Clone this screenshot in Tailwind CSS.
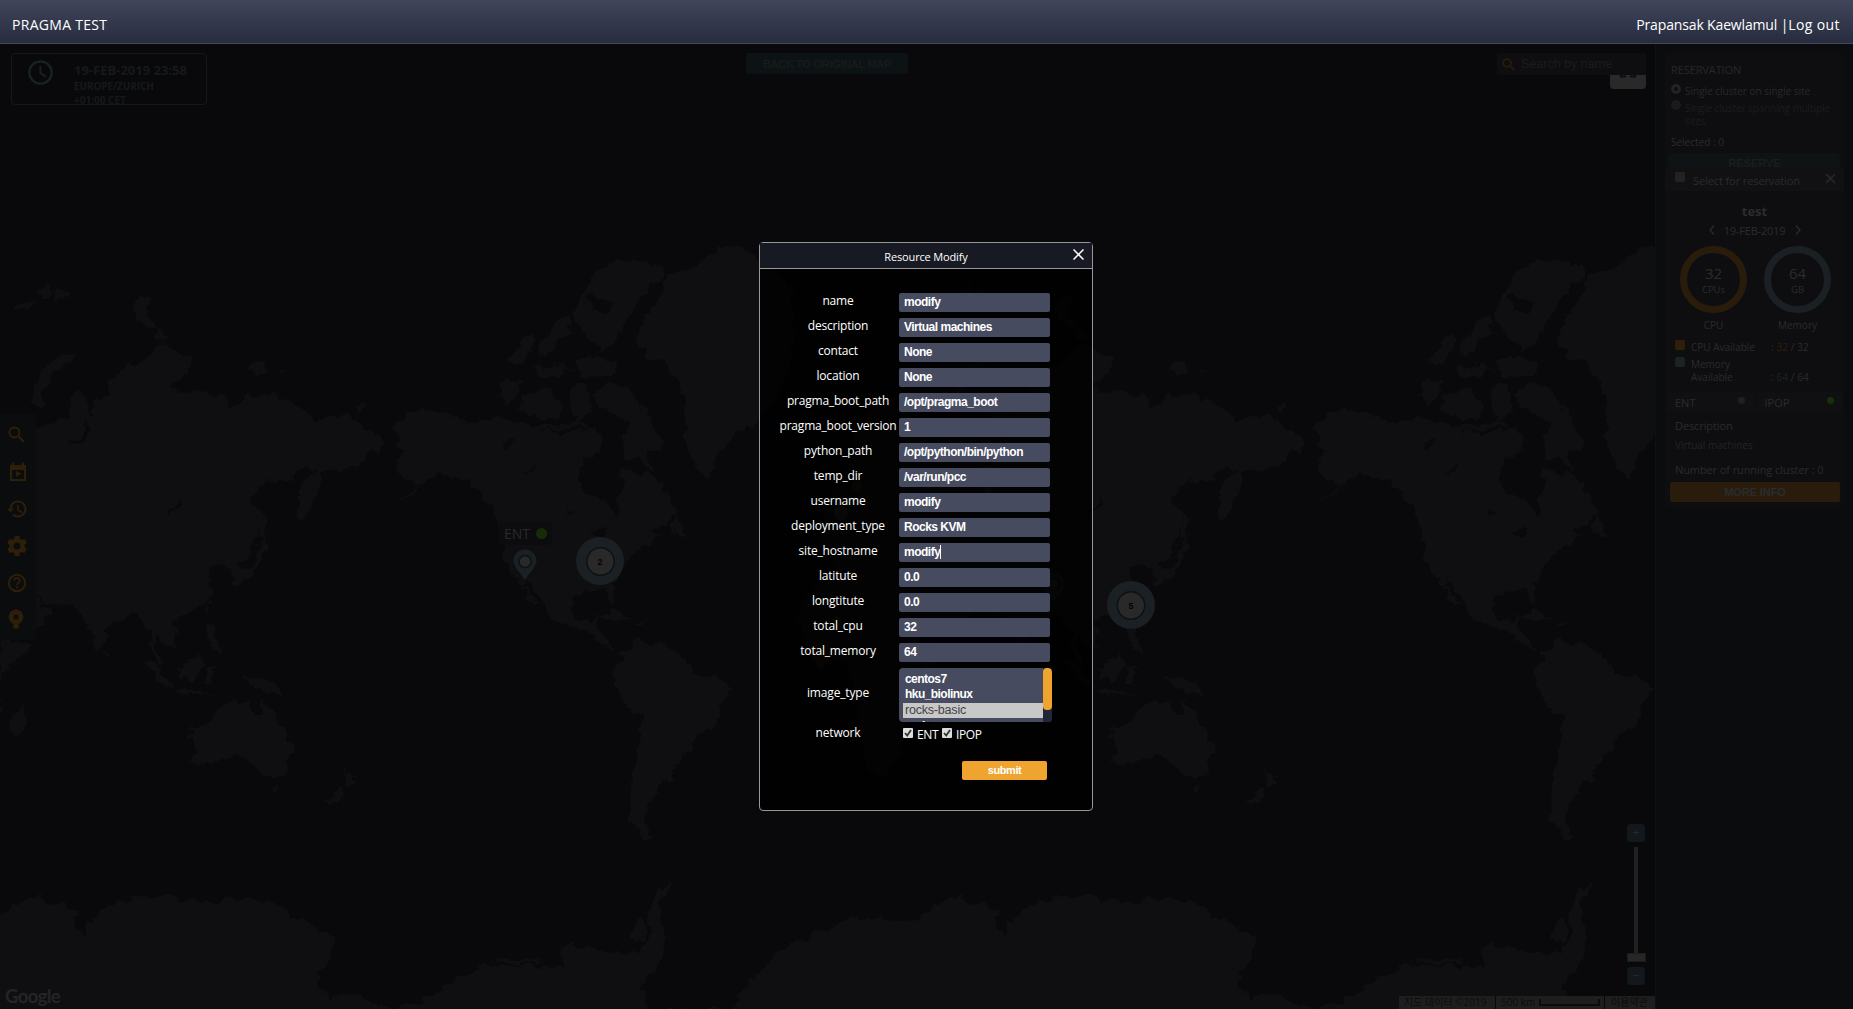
<!DOCTYPE html>
<html lang="en">
<head>
<meta charset="utf-8">
<title>PRAGMA TEST</title>
<script src="https://cdn.jsdelivr.net/npm/@tailwindcss/browser@4"></script>
</head>
<body class="bg-[#09090b]">
<div class="relative flex h-[1009px] w-[1853px] flex-col overflow-hidden bg-[#09090b] font-['Open_Sans','Noto_Sans_CJK_KR',sans-serif] text-[#2b2b2c]">

  <header class="z-10 flex h-11 shrink-0 items-center justify-between border-b border-[#41465c] bg-linear-to-b from-[#40455a] to-[#282c3f] pl-3 pr-[13px] pt-1.5 text-[14px] text-white">
    <span class="tracking-[0.3px]">PRAGMA TEST</span>
    <span class="tracking-[-0.15px]">Prapansak Kaewlamul |<span class="tracking-[0.4px]">Log out</span></span>
  </header>

  <main class="flex min-h-0 flex-1">
    <section class="relative flex-1 overflow-hidden">
      <!-- world map, repeated horizontally -->
      <svg class="absolute left-0 top-0" width="1655" height="965" viewBox="0 44 1655 965">
        <defs>
          <filter id="coast" color-interpolation-filters="sRGB" filterUnits="userSpaceOnUse" x="-100" y="220" width="1100" height="800">
            <feTurbulence type="fractalNoise" baseFrequency="0.09" numOctaves="3" seed="4" result="n"/>
            <feDisplacementMap in="SourceGraphic" in2="n" scale="13" xChannelSelector="R" yChannelSelector="G"/>
          </filter>
          <g id="world" filter="url(#coast)"><g transform="translate(0 220) scale(.4974 .5032)">
            <g fill="#0f0f11">
              <path d="M-130 450L-90 400L-60 385L-20 420L20 400L72 410L108 404L140 392L147 350L160 335L172 350L180 390L190 360L215 350L218 320L240 305L262 288L290 284L312 250L335 246L350 262L378 268L384 290L365 318L345 332L380 340L430 350L450 340L462 375L500 350L540 346L580 358L620 380L632 396L700 388L735 410L775 443L765 462L748 455L720 488L690 495L650 498L640 530L630 560L605 600L598 560L610 520L640 490L600 500L585 516L535 518L497 560L525 580L522 625L498 668L478 682L488 702L470 710L462 690L445 684L418 690L425 740L408 770L365 786L345 800L360 825L352 845L335 848L318 830L308 822L312 850L330 878L322 885L304 850L300 815L285 800L268 780L248 790L215 815L205 850L194 850L172 800L165 782L140 764L90 760L70 740L90 765L105 782L80 808L30 830L0 800L-30 750L-60 730L-130 700Z"/>
              <path d="M62 370L72 320L95 285L125 268L153 263L148 280L110 302L90 335L80 375Z"/>
              <path d="M270 185L282 150L296 152L298 185L312 210L295 220ZM312 212L338 238L330 245L314 232Z"/>
              <path d="M30 165L70 160L60 185L32 172ZM78 140L95 128L100 150L82 160ZM104 148L120 135L133 155L112 162ZM502 290L520 280L530 292L545 298L522 312L504 305ZM552 300L572 303L560 308ZM718 372L730 366L736 374L720 378Z"/>
              <path d="M524 575L538 600L530 640L545 645L528 662L522 690L505 705L475 722L465 720L480 702L512 688L518 650L526 630Z"/>
              <path d="M416 776L424 752L428 760L420 778ZM208 852L218 862L212 864ZM415 800L428 805L430 835L446 855L440 862L418 838ZM288 870L312 880L335 915L348 934L330 928L305 898ZM350 934L412 940L440 944L400 946L352 938ZM358 892L385 870L400 862L408 882L392 915L362 908ZM410 890L445 884L422 898L430 922L412 920ZM480 905L510 908L550 918L575 948L540 935L510 930Z"/>
              <path d="M380 1015L430 992L445 970L470 955L498 960L508 985L525 985L530 950L548 982L568 1010L588 1045L582 1070L570 1108L535 1106L512 1090L500 1068L465 1065L430 1075L398 1085L388 1078L390 1050ZM542 1124L562 1124L552 1140ZM690 1085L702 1100L716 1104L700 1128L690 1120L700 1110ZM655 1160L685 1130L692 1136L668 1164Z"/>
              <path d="M0 835L62 840L45 865L10 895L0 920ZM18 1000L48 958L54 975L40 1025L24 1028ZM0 945L6 960L2 980L0 980Z"/>
              <!-- north america -->
              <path d="M790 410L820 384L845 373L900 388L950 405L1000 388L1060 405L1110 410L1160 395L1200 420L1215 440L1200 465L1170 485L1163 512L1180 545L1225 560L1232 588L1244 585L1240 555L1255 535L1245 500L1255 488L1290 500L1315 510L1340 540L1363 580L1345 600L1310 618L1325 630L1290 650L1272 665L1245 700L1230 730L1238 762L1225 758L1215 735L1180 736L1152 745L1148 775L1165 798L1190 795L1200 780L1196 810L1215 820L1225 845L1250 858L1215 850L1190 822L1112 795L1085 755L1060 715L1050 725L1088 772L1070 760L1040 715L1012 675L1008 620L985 575L960 535L930 518L895 505L860 515L845 535L785 572L820 545L848 528L800 505L795 485L815 460L790 450L800 435Z"/>
              <path d="M1155 190L1170 150L1200 100L1245 80L1300 80L1335 100L1325 125L1290 150L1262 200L1240 240L1215 262L1180 230L1160 210Z"/>
              <path d="M1005 345L1012 315L1050 322L1045 345L1015 372ZM1050 350L1100 330L1130 370L1115 400L1070 392L1045 378ZM1020 280L1050 240L1070 225L1075 250L1045 285ZM1080 260L1110 205L1145 190L1150 230L1120 240L1100 275ZM1070 290L1110 295L1130 278L1145 300L1090 318ZM1155 280L1175 268L1240 285L1240 310L1170 312ZM1150 330L1180 330L1188 380L1160 400L1150 370ZM1190 345L1230 325L1260 335L1300 380L1332 440L1325 460L1300 450L1310 498L1285 480L1260 470L1250 430L1268 410L1245 390L1205 378Z"/>
              <path d="M1348 605L1362 588L1378 625L1350 620ZM1190 790L1230 775L1272 795L1240 792ZM1275 797L1310 802L1280 804Z"/>
              <path d="M1278 232L1300 190L1330 150L1340 110L1400 90L1440 60L1490 52L1526 75L1560 90L1590 140L1600 240L1575 330L1526 405L1480 425L1445 460L1425 516L1398 490L1375 430L1378 380L1362 320L1340 282L1300 275Z"/>
              <!-- south america -->
              <path d="M1250 860L1280 835L1325 842L1360 858L1385 875L1392 898L1440 908L1470 932L1450 965L1440 1005L1402 1025L1382 1065L1355 1085L1355 1105L1328 1115L1318 1145L1305 1155L1298 1195L1308 1230L1280 1220L1262 1180L1270 1110L1285 1040L1290 990L1262 970L1234 925L1240 890Z"/>
              <!-- europe and africa -->
              <path d="M1660 560L1700 500L1720 410L1770 360L1830 380L1850 700L1700 710L1650 660ZM1650 710L1760 700L1850 760L1840 960L1810 1060L1770 1110L1740 1080L1720 950L1700 880L1620 860L1600 790Z"/>
              <!-- antarctica -->
              <path d="M-20 1400L30 1360L75 1345L100 1358L158 1370L150 1400L165 1420L175 1395L215 1365L250 1352L310 1342L370 1350L415 1356L490 1345L550 1358L590 1380L640 1410L676 1428L665 1470L645 1495L638 1515L655 1550L700 1535L760 1560L810 1566L860 1545L900 1520L960 1482L1080 1480L1130 1488L1125 1440L1180 1448L1240 1455L1290 1455L1310 1415L1300 1375L1320 1335L1362 1314L1325 1360L1336 1420L1335 1470L1290 1520L1300 1568L1470 1568L1500 1525L1568 1450L1700 1390L1852 1390V1600H-20Z"/>
              <path d="M1262 1420L1290 1385L1302 1430L1280 1440ZM990 1470L1060 1465L1100 1474L1000 1478Z"/>
            </g>
            <g fill="#09090b">
              <path d="M330 588L350 570L362 552L360 570ZM130 440L165 430L172 395L178 420L168 440L140 450ZM1010 440L1040 432L1020 455ZM1052 498L1090 485L1065 500ZM1140 570L1152 590L1146 592ZM1185 622L1215 618L1210 630ZM1180 150L1240 165L1215 190L1195 180ZM1080 420L1200 410L1150 424Z"/>
            </g>
          </g></g>
        </defs>
        <use href="#world"/>
        <use href="#world" x="921"/>
      </svg>

      <!-- clock -->
      <div class="absolute left-[11px] top-[9px] flex h-[52px] w-[196px] overflow-hidden rounded border border-[#14181b] text-[#15191c]">
        <svg class="ml-4 mt-1.5 size-[25px] shrink-0" viewBox="0 0 25 25" fill="none" stroke="#1a2125" stroke-width="2.3"><circle cx="12.5" cy="12.5" r="11.2"/><path d="M12.3 6v7l5.8 3.8" stroke-width="1.8"/></svg>
        <div class="ml-[21px] mt-[7px] whitespace-nowrap text-[10px] font-bold leading-[14px]">
          <p class="text-[13px] leading-[18px]">19-FEB-2019 23:58</p>
          <p class="tracking-[-0.1px]">EUROPE/ZURICH</p>
          <p class="leading-[14px]">+01:00 CET</p>
        </div>
      </div>

      <button class="absolute left-[746px] top-[9px] h-[21px] w-[162px] rounded-xs bg-[#0d1214] pt-px font-['Liberation_Sans'] text-[11px] font-bold leading-[20px] tracking-[-0.3px] text-[#181a1b]">BACK TO ORIGINAL MAP</button>

      <div class="absolute left-[1610px] top-[30px] h-[15px] w-9 rounded-b-sm bg-[#29292a]">
        <svg class="absolute left-2.5 top-0" width="16" height="5" fill="none" stroke="#0c0c0d" stroke-width="2"><path d="M1 0v2.500h5M15 0v2.500h-5"/></svg>
      </div>
      <div class="absolute left-[1497px] top-[9px] flex h-[22px] w-[149px] items-center gap-1.5 bg-[#0e0e10] pl-[5px] pt-px font-['Liberation_Sans'] text-[12.500px] text-[#1b1b1d]">
        <svg class="size-[13px]" viewBox="0 0 13 13" fill="none" stroke="#2b1d08" stroke-width="1.7"><circle cx="5" cy="5" r="3.9"/><path d="M8 8l4.300 4.300"/></svg>
        <span>Search by name</span>
      </div>

      <!-- markers -->
      <div class="absolute left-[499px] top-[478px] flex h-[23px] w-[53px] items-center gap-1.5 rounded-sm bg-[#0c0c0e] pl-[5px] text-[14px] text-[#29292a]"><span>ENT</span><i class="size-[11px] rounded-full bg-[#172b08]"></i></div>
      <svg class="absolute left-0 top-0" width="1655" height="965" viewBox="0 44 1655 965" font-family="Liberation Sans" font-size="9" font-weight="bold" text-anchor="middle">
        <defs><path id="pin" d="M0-11.500c-7 0-11.500 5.200-11.500 11.500 0 5.500 6 10.500 11.500 19 5.500-8.500 11.500-13.500 11.500-19 0-6.300-4.500-11.500-11.500-11.500z"/></defs>
        <g fill="#1a2023"><use href="#pin" x="525" y="561"/><use href="#pin" x="988" y="477"/><use href="#pin" x="1053" y="584"/></g>
        <use href="#pin" x="821" y="651" fill="#2b1d08"/>
        <g fill="#292929" stroke="#0d1114" stroke-width="1.500"><circle cx="525" cy="561.500" r="6"/><circle cx="841" cy="513" r="8"/><circle cx="1053" cy="584" r="6"/></g>
        <g fill="#172b08"><circle cx="857" cy="486" r="5.500"/><circle cx="837" cy="622" r="5.500"/></g>
        <g fill="#1a2023"><circle cx="600" cy="561" r="24"/><circle cx="1131" cy="605" r="24"/></g>
        <g fill="#292929" stroke="#0d1114" stroke-width="1.500"><circle cx="600.500" cy="561.500" r="13.700"/><circle cx="1131" cy="605.500" r="13.700"/></g>
        <g fill="#020203"><text x="600" y="564.500">2</text><text x="1131" y="608.500">5</text></g>
      </svg>

      <!-- tool bar -->
      <nav class="absolute left-0 top-[370px] h-[226px] w-9 bg-[#0a0c0e]">
        <svg width="36" height="226" viewBox="0 414 36 226" fill="#2e1f08">
          <g fill="none" stroke="#2e1f08" stroke-width="2">
            <circle cx="14.500" cy="432.500" r="5"/><path d="M18.300 436.300l5.700 5.700"/>
            <path d="M11 466h14v14H11z"/>
            <path d="M10.500 509a7.500 7.500 0 1 1 2.500 5.500"/><path d="M18 505v5l4 2.500" stroke-width="1.600"/>
            <circle cx="17" cy="583" r="8.200"/>
            <path d="M14.200 580.800c0-4 5.600-3.800 5.600-.3 0 2-2.800 2.200-2.800 4.800" stroke-width="1.800"/>
          </g>
          <path d="M10 465h16v5H10zM12 462.500h2v3h-2zM22 462.500h2v3h-2zM16 470.800l5.500 3-5.500 3zM7 508.500h7l-3.500 4zM16 586.500h2v2h-2z"/>
          <path transform="translate(5 534)" d="M19.430 12.980c.04-.32.070-.64.070-.98s-.030-.66-.070-.98l2.110-1.650c.19-.15.240-.42.120-.64l-2-3.460c-.12-.22-.39-.3-.61-.22l-2.490 1c-.52-.4-1.080-.73-1.690-.98l-.38-2.650C14.460 2.180 14.250 2 14 2h-4c-.25 0-.46.18-.49.42l-.38 2.650c-.61.25-1.170.59-1.690.98l-2.490-1c-.23-.090-.49 0-.61.22l-2 3.460c-.13.22-.070.490.120.640l2.110 1.650c-.04.32-.070.65-.070.98s.030.66.070.98l-2.110 1.650c-.19.15-.24.42-.12.640l2 3.460c.12.22.39.3.61.22l2.490-1c.52.4 1.080.73 1.690.98l.38 2.650c.030.240.240.420.490.420h4c.25 0 .46-.18.490-.42l.38-2.650c.61-.25 1.170-.59 1.690-.98l2.490 1c.23.090.490 0 .61-.22l2-3.460c.12-.22.070-.490-.12-.640zM12 15.500a3.500 3.500 0 1 1 0-7 3.500 3.500 0 0 1 0 7z"/>
          <path fill-rule="evenodd" d="M16 609.500a7.500 7.500 0 0 1 2.500 14.500V628.500h-5V624A7.500 7.500 0 0 1 16 609.500zm0 5a2.500 2.500 0 1 0 0 5 2.500 2.500 0 0 0 0-5z"/>
        </svg>
      </nav>

      <span class="absolute bottom-px left-[5px] font-[Lato] text-[18.500px] font-bold leading-6 tracking-[-0.6px] text-[#242425]">Google</span>

      <!-- zoom slider -->
      <div class="absolute left-[1627px] top-[780px] flex w-[19px] flex-col items-center text-[#242a2e]">
        <span class="mr-px h-[18px] w-[18px] rounded-sm bg-[#12181b] text-center text-[13px] leading-[17px]">+</span>
        <span class="mr-px mt-[5px] h-[106px] w-1 bg-[#212122]"></span>
        <span class="h-[9px] w-[19px] border border-[#1c1c1c] bg-[#262626]"></span>
        <span class="mr-px mt-[5px] h-[18px] w-[18px] rounded-sm bg-[#12181b] text-center text-[13px] leading-[17px]">−</span>
      </div>
      <div class="absolute bottom-0 right-0 flex h-[13px] w-[256px] bg-[#1e1e1f] text-[10px] leading-[13px] text-[#0c0c0c]">
        <span class="w-[97px] border-r border-[#09090b] pl-[5px] whitespace-nowrap">지도 데이터 ©2019</span>
        <span class="flex w-[109px] items-center border-r border-[#09090b] pl-[5px] whitespace-nowrap">500 km<i class="ml-1 h-[7px] w-[61px] border-x-2 border-b-2 border-[#0c0c0c]"></i></span>
        <span class="pl-1.5">이용약관</span>
      </div>
    </section>

    <!-- reservation side bar -->
    <aside class="w-[198px] shrink-0 border-l border-[#0e1012] bg-[#0b0c0e] pl-[9px] pt-[9px] text-[10px] font-medium">
      <div class="h-[114px] w-[179px] overflow-hidden rounded bg-[#0e0e10] pt-2">
        <h2 class="pl-1.5 text-[11px] leading-[18px] tracking-[-0.1px] text-[#272728]">RESERVATION</h2>
        <div class="mt-[5px] flex gap-1 pl-1.5"><i class="size-2.5 shrink-0 rounded-full border-[3px] border-[#232324] bg-[#0e0e10]"></i><span class="leading-[15px] text-[#28282a]">Single cluster on single site</span></div>
        <div class="mt-px flex gap-1 pl-1.5 leading-[13px] text-[#1c1c1d]"><i class="size-2.5 shrink-0 rounded-full bg-[#1a1a1b]"></i><span class="pt-0.5 tracking-[-0.1px]">Single cluster spanning multiple sites</span></div>
        <p class="mt-[7px] pl-1.5 leading-[15px]">Selected : 0</p>
        <button class="ml-1 mt-[3px] block h-[18px] w-[171px] rounded-t-sm bg-[#0e1315] pt-0.5 font-['Liberation_Sans'] text-[11px] font-bold leading-[16px] text-[#1b1d1e]">RESERVE</button>
      </div>
      <div class="h-[340px] w-[179px] rounded bg-[#0e0e10]">
        <div class="flex h-6 items-center rounded-t bg-[#111113] pl-2.5 text-[11px]">
          <i class="-mt-1 size-2.5 rounded-xs bg-[#222223]"></i><span class="ml-2 w-[132px] pt-1 tracking-[-0.1px]">Select for reservation</span>
          <svg class="-mt-0.5" width="11" height="11" stroke="#29292a" stroke-width="1.500"><path d="M1 1l9 9M10 1l-9 9"/></svg>
        </div>
        <h3 class="mt-[11px] text-center text-[13px] font-bold leading-[18px]">test</h3>
        <div class="flex h-[19px] items-center justify-center gap-[9px] text-[11px]">
          <svg width="6" height="10" fill="none" stroke="#29292a" stroke-width="1.500"><path d="M5 .5L1 5l4 4.500"/></svg><span class="w-[62px] pt-1 text-center tracking-[-0.2px] whitespace-nowrap">19-FEB-2019</span><svg width="6" height="10" fill="none" stroke="#29292a" stroke-width="1.500"><path d="M1 .5L5 5 1 9.500"/></svg>
        </div>
        <div class="mt-[7px] flex justify-between pl-[15px] pr-[13px] text-center">
          <div><div class="size-[67px] rounded-full border-[7px] border-[#291c0b] pt-[9px]"><p class="text-[15px] leading-[22px] font-normal">32</p><p class="text-[9.500px] leading-3">CPUs</p></div><p class="mt-[6px] text-[10px] leading-[13px]">CPU</p></div>
          <div><div class="size-[67px] rounded-full border-[7px] border-[#1a2023] pt-[9px]"><p class="text-[15px] leading-[22px] font-normal">64</p><p class="text-[9.500px] leading-3">GB</p></div><p class="mt-[6px] text-[10px] leading-[13px]">Memory</p></div>
        </div>
        <div class="mt-2 grid grid-cols-[16px_80px_1fr] gap-y-[3px] pl-2.5 leading-[13px]">
          <i class="size-2.5 rounded-xs bg-[#2e1f0b]"></i><span class="pt-px">CPU Available</span><span class="pt-px tracking-[0.1px]">: <b class="font-medium text-[#2e1f0b]">32</b> / 32</span>
          <i class="size-2.5 rounded-xs bg-[#1a2226]"></i><span class="pt-px">Memory<br>Available</span><span class="self-end tracking-[0.1px]">: <b class="font-medium text-[#1a2226]">64</b> / 64</span>
        </div>
        <div class="mt-2 flex h-[19px] gap-0.5 px-0.5 text-[11px]">
          <div class="flex flex-1 items-center justify-between bg-[#101012] pl-2 pr-2.5"><span class="pt-1">ENT</span><i class="-mt-0.5 size-[7px] rounded-full bg-[#202021]"></i></div>
          <div class="flex flex-1 items-center justify-between bg-[#101012] pl-2 pr-2"><span class="pt-1">IPOP</span><i class="-mt-0.5 size-[7px] rounded-full bg-[#173008]"></i></div>
        </div>
        <p class="mt-[6px] pl-2.5 text-[11px] leading-[18px] tracking-[-0.1px]">Description</p>
        <p class="mt-px pl-2.5 leading-[18px] text-[#232324]">Virtual machines</p>
        <p class="mt-[7px] pl-2.5 text-[11px] leading-[18px] tracking-[-0.1px] whitespace-nowrap">Number of running cluster : 0</p>
        <button class="ml-[5px] mt-[3px] block h-5 w-[170px] rounded-xs bg-[#291c0c] font-['Liberation_Sans'] text-[11px] font-bold leading-5 tracking-[-0.1px]">MORE INFO</button>
      </div>
    </aside>
  </main>

  <!-- resource modify dialog -->
  <div class="absolute left-[759px] top-[242px] z-20 h-[569px] w-[334px] rounded-sm border border-[#98989a] bg-black/80 text-[12px] text-white">
    <div class="relative flex h-[26px] items-center justify-center border-b border-[#98989a] bg-[#171923] pt-1 text-[11px] tracking-[-0.15px]">Resource Modify
      <svg class="absolute right-2 top-1.5" width="11" height="11" stroke="#fff" stroke-width="1.500"><path d="M.5.5l10 10M10.500.5l-10 10"/></svg>
    </div>
    <form class="flex flex-col gap-1.5 pl-[18px] pt-6">
      <div id="fields" class="flex flex-col gap-1.5"></div>
      <div class="flex h-[54px] items-center gap-px">
        <label class="-mt-[5px] w-[120px] text-center tracking-[-0.15px]">image_type</label>
        <div class="relative h-[54px] w-[153px] overflow-hidden rounded-sm bg-[#474b5f] pl-1 pt-[3px] font-['Liberation_Sans'] text-[12px] font-bold tracking-[-0.55px]">
          <p class="h-[15px] pl-0.5 leading-4">centos7</p>
          <p class="h-[17px] pl-0.5 leading-4">hku_biolinux</p>
          <p class="h-[15px] w-[140px] bg-[#c8c8c8] pl-0.5 text-[12.500px] font-normal leading-[14px] tracking-[-0.2px] text-[#444]">rocks-basic</p>
          <p class="h-4 pl-0.5 leading-4">rocks-sge</p>
          <div class="absolute right-0 top-0 h-full w-[9px] bg-[#20263a]"><div class="h-[42px] rounded-sm bg-[#efa430]"></div></div>
        </div>
      </div>
      <div class="flex h-3.5 items-center gap-px">
        <label class="-mt-[5px] w-[120px] text-center tracking-[-0.15px]">network</label>
        <div class="-mt-0.5 flex items-center pl-1 text-[12px]">
          <svg class="-mt-0.5" width="10" height="10"><rect width="10" height="10" rx="1" fill="#dcdcdc"/><path d="M2 5l2.200 2.500L8 2" fill="none" stroke="#333" stroke-width="1.800"/></svg><span class="ml-1 w-[25px] pt-0.5 tracking-[-0.4px]">ENT</span>
          <svg class="-mt-0.5" width="10" height="10"><rect width="10" height="10" rx="1" fill="#dcdcdc"/><path d="M2 5l2.200 2.500L8 2" fill="none" stroke="#333" stroke-width="1.800"/></svg><span class="ml-1 pt-0.5 tracking-[-0.4px]">IPOP</span>
        </div>
      </div>
      <button type="button" class="ml-[184px] mt-[13px] h-[19px] w-[85px] rounded-xs bg-[#efa430] font-['Liberation_Sans'] text-[11px] font-bold leading-[19px] tracking-[-0.4px]">submit</button>
    </form>
  </div>
</div>
<script>
  const fields = [["name","modify"],["description","Virtual machines"],["contact","None"],["location","None"],["pragma_boot_path","/opt/pragma_boot"],["pragma_boot_version","1"],["python_path","/opt/python/bin/python"],["temp_dir","/var/run/pcc"],["username","modify"],["deployment_type","Rocks KVM"],["site_hostname","modify"],["latitute","0.0"],["longtitute","0.0"],["total_cpu","32"],["total_memory","64"]];
  document.getElementById("fields").innerHTML = fields.map(([k, v]) => `<div class="flex h-[19px] items-center gap-px"><label class="w-[120px] -mt-1 text-center tracking-[-0.2px] whitespace-nowrap">${k}</label><div class="flex h-[19px] w-[151px] items-center rounded-xs bg-[#474b5f] pb-0.5 pl-[5px] font-['Liberation_Sans'] text-[12px] font-bold tracking-[-0.5px]">${v}${k === "site_hostname" ? '<i class="h-3.5 w-px bg-white"></i>' : ""}</div></div>`).join("");
</script>
</body>
</html>
